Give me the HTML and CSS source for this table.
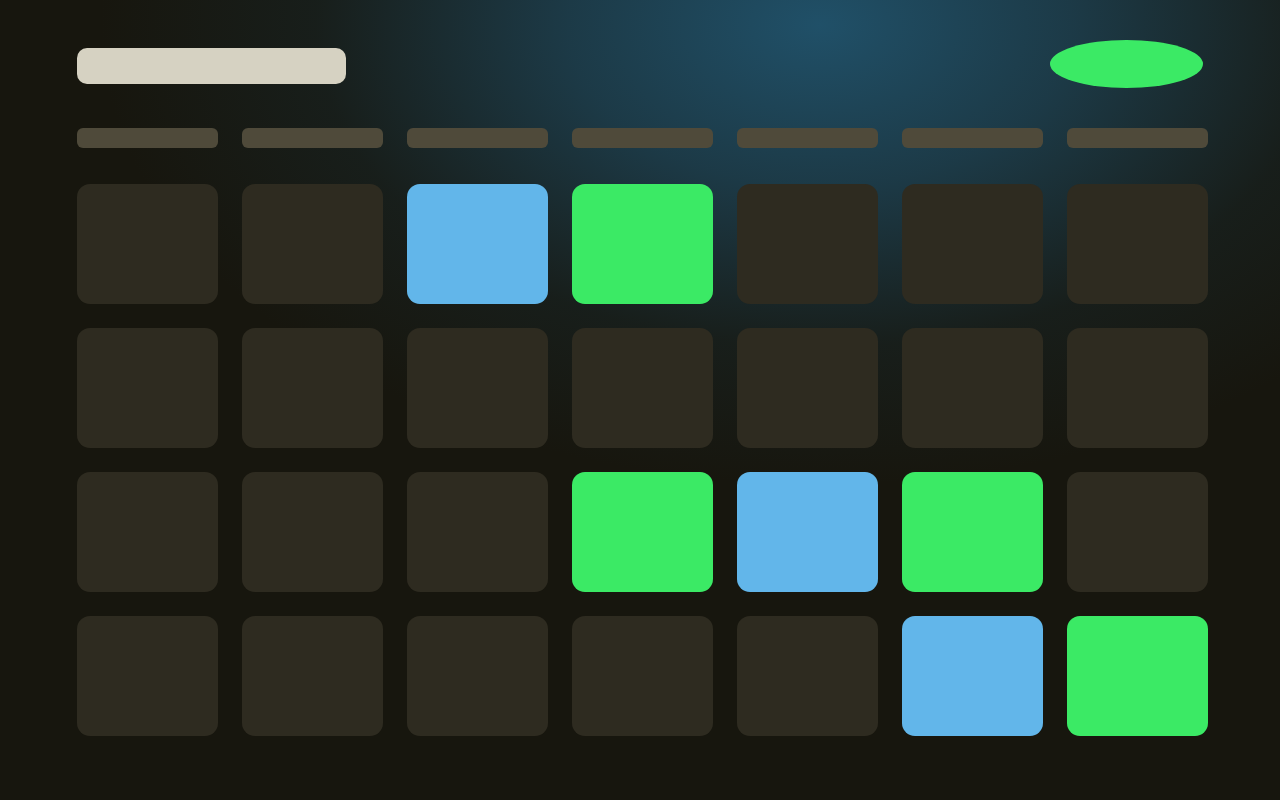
FILE: index.html
```html
<!DOCTYPE html>
<html>
<head>
<meta charset="utf-8">
<link rel="stylesheet" href="styles.css">
</head>
<body>
<div class="page">
  <header class="top">
    <div class="title"></div>
    <div class="pill"></div>
  </header>
  <div class="days">
    <div class="day"></div><div class="day"></div><div class="day"></div><div class="day"></div><div class="day"></div><div class="day"></div><div class="day"></div>
  </div>
  <div class="grid">
    <div class="cell"></div><div class="cell"></div><div class="cell blue"></div><div class="cell green"></div><div class="cell"></div><div class="cell"></div><div class="cell"></div>
    <div class="cell"></div><div class="cell"></div><div class="cell"></div><div class="cell"></div><div class="cell"></div><div class="cell"></div><div class="cell"></div>
    <div class="cell"></div><div class="cell"></div><div class="cell"></div><div class="cell green"></div><div class="cell blue"></div><div class="cell green"></div><div class="cell"></div>
    <div class="cell"></div><div class="cell"></div><div class="cell"></div><div class="cell"></div><div class="cell"></div><div class="cell blue"></div><div class="cell green"></div>
  </div>
</div>
</body>
</html>
```

FILE: styles.css
```css
html, body {
  margin: 0;
  height: 100%;
}
body {
  background-color: #17160e;
  background-image: radial-gradient(ellipse 720px 460px at 820px 25px, rgba(32, 80, 104, 1) 0%, rgba(30, 70, 90, 0.75) 35%, rgba(25, 45, 50, 0.35) 70%, rgba(23, 22, 14, 0) 100%);
  background-repeat: no-repeat;
  width: 1280px;
  height: 800px;
  overflow: hidden;
  font-family: "Liberation Sans", sans-serif;
}
.page {
  padding: 40px 72px 0 77px;
}
.top {
  display: flex;
  justify-content: space-between;
  align-items: flex-start;
  height: 48px;
}
.title {
  margin-top: 8px;
  width: 269px;
  height: 36px;
  border-radius: 10px;
  background: #d6d2c2;
}
.pill {
  width: 153px;
  height: 48px;
  border-radius: 50%;
  background: #3bea65;
  margin-right: 5px;
}
.days {
  margin-top: 40px;
  display: grid;
  grid-template-columns: repeat(7, 141px);
  column-gap: 24px;
}
.day {
  height: 20px;
  border-radius: 6px;
  background: #4f4a3a;
}
.grid {
  margin-top: 36px;
  display: grid;
  grid-template-columns: repeat(7, 141px);
  grid-auto-rows: 120px;
  gap: 24px;
}
.cell {
  border-radius: 13px;
  background: #2e2b20;
}
.cell.blue { background: #62b6ea; }
.cell.green { background: #3bea65; }
```
